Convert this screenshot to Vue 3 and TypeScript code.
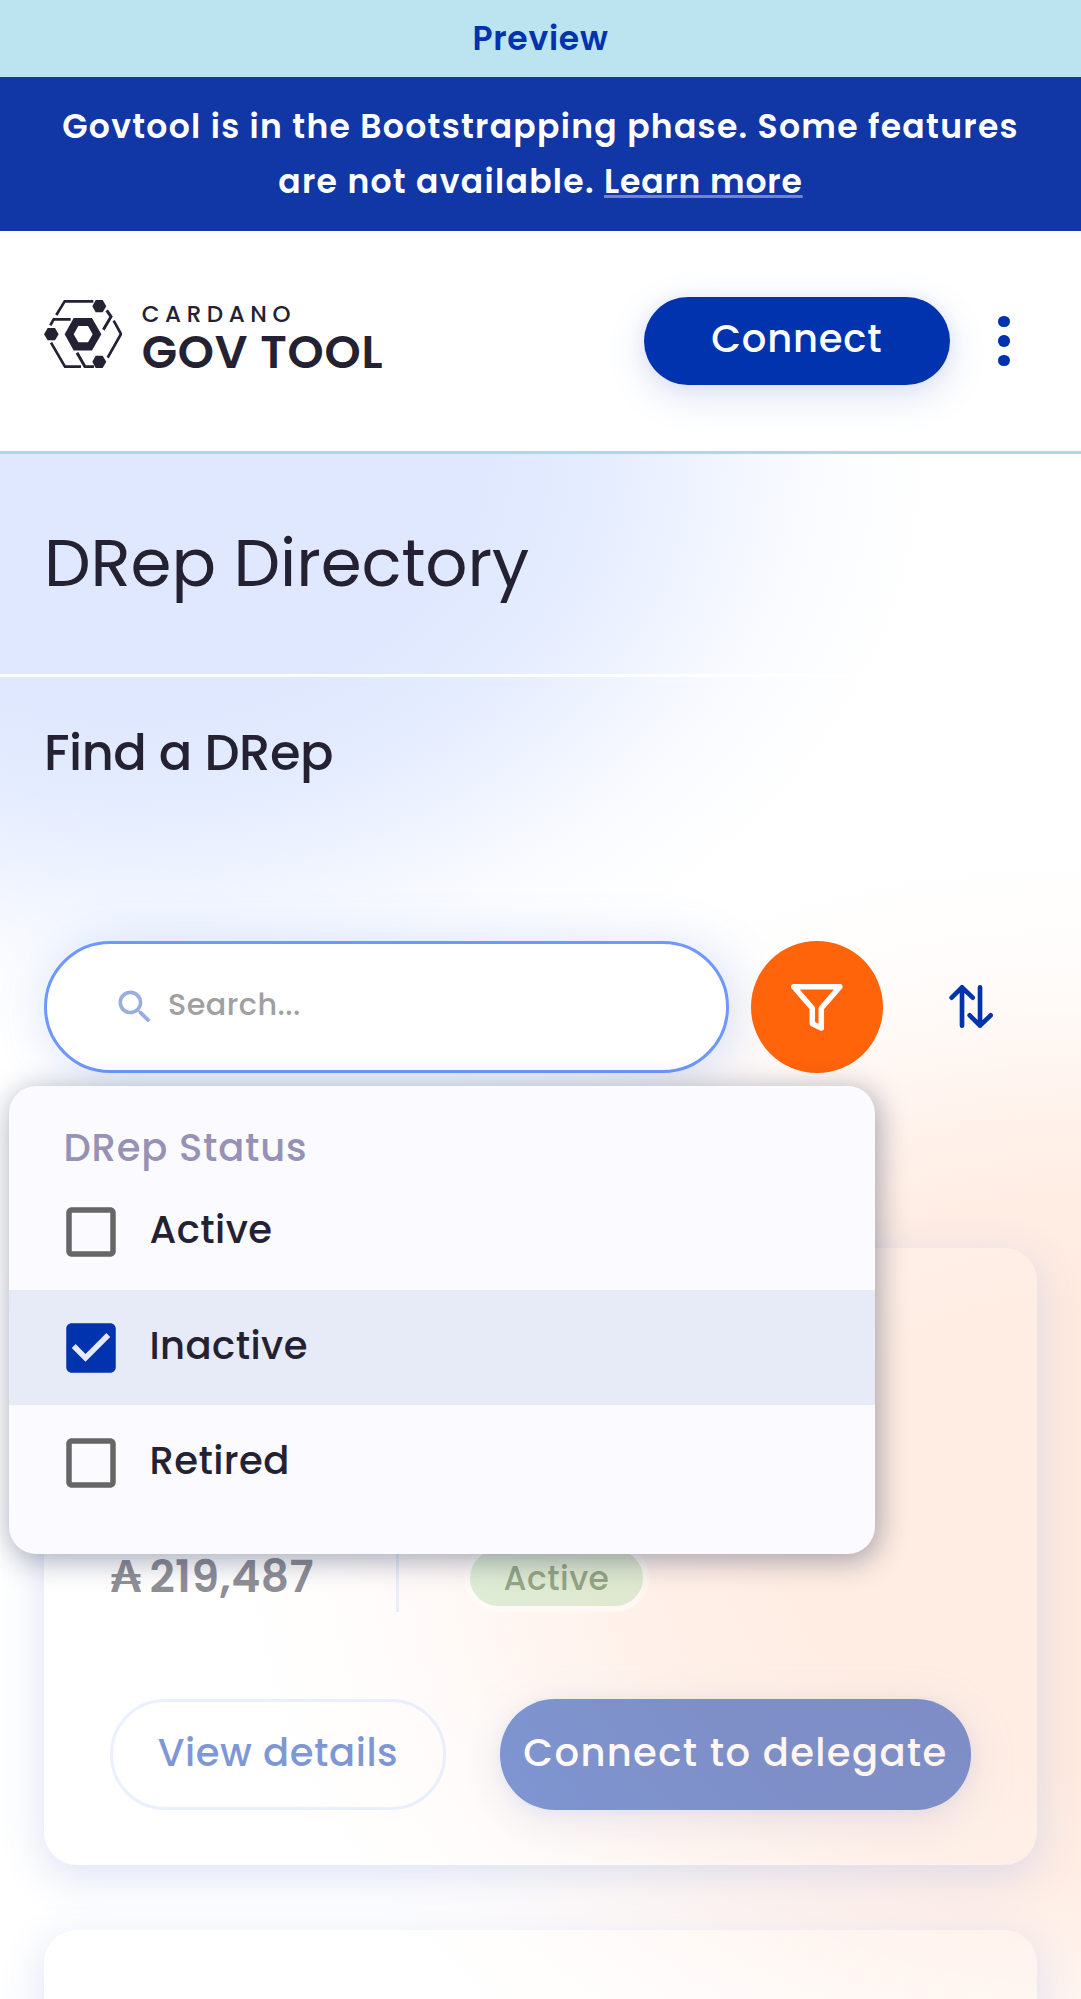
<script setup lang="ts">
import { ref } from 'vue'

interface StatusOption {
  label: string
  checked: boolean
}

const checkedPath =
  'M19 3H5c-1.11 0-2 .9-2 2v14c0 1.1.89 2 2 2h14c1.11 0 2-.9 2-2V5c0-1.1-.89-2-2-2zm-9 14l-5-5 1.41-1.41L10 14.17l7.59-7.59L19 8l-9 9z'
const uncheckedPath =
  'M19 5v14H5V5h14m0-2H5c-1.1 0-2 .9-2 2v14c0 1.1.9 2 2 2h14c1.1 0 2-.9 2-2V5c0-1.1-.9-2-2-2z'

const statuses = ref<StatusOption[]>([
  { label: 'Active', checked: false },
  { label: 'Inactive', checked: true },
  { label: 'Retired', checked: false },
])
</script>

<template>
  <div class="page">
    <div class="env-bar">Preview</div>
    <div class="notice">
      Govtool is in the Bootstrapping phase. Some features<br />
      are not available. <a class="learn">Learn more</a>
    </div>

    <header class="topbar">
      <div class="logo">
        <svg class="logo-mark" viewBox="12 30 234 204" fill="none" stroke="#242232" stroke-width="8">
          <path d="M49 75 74 34H160" />
          <path d="M31 106 41 88H92" />
          <path d="M200 61 213 80 190 119" stroke-width="9" />
          <path d="M221 92 243 132 203 203" />
          <path d="M33 158 75 230H123" />
          <path d="M111 188 135 230H162" stroke-width="9" />
          <g fill="#242232" stroke="none">
            <path d="M157 48.500 167 30H188L199 48.500 188 67H167Z" />
            <path d="M12 132.500 23 114H45L56 132.500 45 151H23Z" />
            <path d="M157 215.500 167 197H188L199 215.500 188 234H167Z" />
            <path
              fill-rule="evenodd"
              d="M74 132.500 101 84H156L184 132.500 156 181.500H101ZM101 132.500 115 157H144L158 132.500 144 108H115Z"
            />
          </g>
        </svg>
        <div class="logo-text">
          <span class="logo-top">CARDANO</span>
          <span class="logo-bottom">GOV TOOL</span>
        </div>
      </div>
      <div class="topbar-actions">
        <button class="btn-connect">Connect</button>
        <button class="kebab" aria-label="Menu"><i></i><i></i><i></i></button>
      </div>
    </header>

    <main class="content">
      <div class="title-row"><h1>DRep Directory</h1></div>
      <h2>Find a DRep</h2>

      <div class="filters">
        <div class="search">
          <svg class="search-icon" viewBox="0 0 24 24" fill="#99adde">
            <path
              d="M15.500 14h-.79l-.28-.27C15.410 12.590 16 11.110 16 9.500 16 5.910 13.090 3 9.500 3S3 5.910 3 9.500 5.910 16 9.500 16c1.610 0 3.090-.59 4.230-1.570l.27.28v.79l5 4.990L20.490 19l-4.990-5zm-6 0C7.010 14 5 11.990 5 9.500S7.010 5 9.500 5 14 7.010 14 9.500 11.990 14 9.500 14z"
            />
          </svg>
          <span>Search...</span>
        </div>
        <button class="filter-btn" aria-label="Filter">
          <svg viewBox="0 0 132 132" fill="none" stroke="#fff" stroke-width="5.500" stroke-linejoin="round">
            <path d="M42.800 45.700H88.900L70.300 67.300V87L61.300 82.800V67.300Z" />
          </svg>
        </button>
        <button class="sort-btn" aria-label="Sort">
          <svg
            viewBox="926 252 134 134"
            fill="none"
            stroke="#0033ad"
            stroke-width="14"
            stroke-linecap="round"
            stroke-linejoin="round"
          >
            <path d="M965 377V262M934 293 965 262 997 293" />
            <path d="M1019 262V377M988 346 1019 377 1051 346" />
          </svg>
        </button>

        <div class="menu">
          <p class="menu-title">DRep Status</p>
          <label v-for="s in statuses" :key="s.label" class="option" :class="{ selected: s.checked }">
            <svg class="check" viewBox="0 0 24 24">
              <path :d="s.checked ? checkedPath : uncheckedPath" />
            </svg>
            <span>{{ s.label }}</span>
          </label>
        </div>
      </div>

      <section class="card">
        <div class="stats">
          <div class="power"><span class="ada">₳</span><span class="amount">219,487</span></div>
          <div class="status"><span class="pill">Active</span></div>
        </div>
        <div class="card-actions">
          <button class="btn-view">View details</button>
          <button class="btn-delegate">Connect to delegate</button>
        </div>
      </section>
      <section class="card"></section>
    </main>
  </div>
</template>

<style>
body {
  margin: 0;
}
</style>

<style scoped>
* {
  box-sizing: border-box;
}
.page {
  width: 1081px;
  height: 1999px;
  overflow: hidden;
  display: flex;
  flex-direction: column;
  background: #fff;
  color: #242232;
  font-family: Poppins, Inter, sans-serif;
  font-feature-settings: 'cv11';
}
button {
  font: inherit;
  font-feature-settings: inherit;
  border: 0;
  background: none;
  padding: 0;
  margin: 0;
}
.env-bar {
  flex: none;
  height: 77px;
  line-height: 77px;
  text-align: center;
  background: #bbe3f0;
  color: #0033ad;
  font-size: 33px;
  font-weight: 600;
  letter-spacing: 0.740px;
}
.notice {
  flex: none;
  height: 154px;
  padding-top: 22px;
  line-height: 55px;
  text-align: center;
  white-space: nowrap;
  background: #1136a6;
  color: #fff;
  font-size: 33px;
  font-weight: 600;
  letter-spacing: 1.300px;
}
.learn {
  letter-spacing: 0.850px;
  text-decoration: underline;
  text-decoration-color: #7086ca;
  text-decoration-thickness: 2.750px;
  text-underline-offset: 2px;
  text-decoration-skip-ink: none;
}

/* top bar */
.topbar {
  flex: none;
  height: 223px;
  padding: 0 68.500px 0 44px;
  display: flex;
  align-items: center;
  justify-content: space-between;
  border-bottom: 3px solid #abd9e5;
}
.logo {
  display: flex;
  align-items: flex-start;
  gap: 19.700px;
  margin-top: -14px;
}
.logo-mark {
  width: 78px;
  height: 68px;
  display: block;
}
.logo-text {
  display: flex;
  flex-direction: column;
  height: 68px;
}
.logo-top {
  margin-top: 1.500px;
  font-size: 23px;
  line-height: 25px;
  font-weight: 500;
  letter-spacing: 5.600px;
}
.logo-bottom {
  margin-top: 1px;
  font-size: 46px;
  line-height: 48px;
  font-weight: 600;
  letter-spacing: 0.850px;
}
.topbar-actions {
  display: flex;
  align-items: center;
  gap: 46px;
}
.btn-connect {
  width: 305.500px;
  height: 88px;
  padding-bottom: 5px;
  border-radius: 44px;
  background: #0033ad;
  color: #fff;
  font-size: 38.500px;
  font-weight: 500;
  letter-spacing: 0.800px;
  box-shadow: 0 11px 41px #dde3f5, 0 2px 14px rgba(0, 51, 173, 0.12);
}
.kebab {
  width: 17px;
  display: flex;
  flex-direction: column;
  align-items: center;
  gap: 8px;
}
.kebab i {
  width: 11.300px;
  height: 11.300px;
  border-radius: 50%;
  background: #0033ad;
}

/* content */
.content {
  flex: 1;
  min-height: 0;
  background:
    radial-gradient(
      ellipse 760px 570px at 130px 0,
      #e0e8ff 45%,
      rgba(224, 233, 255, 0.88) 60%,
      rgba(224, 233, 255, 0.6) 72%,
      rgba(224, 233, 255, 0.3) 84%,
      rgba(224, 233, 255, 0.12) 93%,
      rgba(224, 233, 255, 0) 106%
    ),
    radial-gradient(
      ellipse 810px 650px at 1080px 1080px,
      #ffeadf 35%,
      rgba(255, 234, 223, 0.85) 52%,
      rgba(255, 234, 223, 0.55) 68%,
      rgba(255, 234, 223, 0.25) 81%,
      rgba(255, 234, 223, 0.09) 92%,
      rgba(255, 234, 223, 0) 105%
    );
}
.title-row {
  height: 223px;
  padding: 69px 44px 0;
  border-bottom: 3px solid rgba(255, 255, 255, 0.9);
}
h1 {
  margin: 0;
  font-size: 66px;
  line-height: 80px;
  font-weight: 400;
  letter-spacing: -0.100px;
}
h2 {
  margin: 45.500px 0 158px 44px;
  font-size: 49.500px;
  line-height: 60px;
  font-weight: 500;
  letter-spacing: -0.450px;
}

.filters {
  position: relative;
  display: flex;
  align-items: center;
  height: 132px;
  margin: 0 44px 175.500px;
}
.search {
  width: 685px;
  height: 132px;
  padding: 0 0 0 66px;
  display: flex;
  align-items: center;
  border: 3px solid #6e97ff;
  border-radius: 66px;
  background: #fff;
  box-shadow: 5.500px 5.500px 55px rgba(47, 98, 220, 0.2);
}
.search-icon {
  flex: none;
  width: 44px;
  height: 44px;
}
.search span {
  margin: 0 0 3.500px 11px;
  font-size: 30.250px;
  line-height: 40px;
  font-weight: 500;
  letter-spacing: 0.450px;
  color: #a0a0a0;
}
.filter-btn {
  width: 132px;
  height: 132px;
  margin-left: 22px;
  border-radius: 50%;
  background: #ff640a;
}
.filter-btn svg {
  display: block;
}
.sort-btn {
  width: 132px;
  height: 132px;
  margin-left: 22px;
  display: flex;
  align-items: center;
  justify-content: center;
}
.sort-btn svg {
  width: 44.700px;
  height: 44.700px;
}

.menu {
  position: absolute;
  z-index: 2;
  left: -35.500px;
  top: 145.500px;
  width: 866.500px;
  height: 467.500px;
  border-radius: 27.500px;
  background: #fbfaff;
  box-shadow: 2.750px 5.500px 30.250px rgba(0, 18, 61, 0.37);
}
.menu-title {
  margin: 39px 0 4.300px 55px;
  font-size: 38.500px;
  line-height: 45px;
  font-weight: 500;
  letter-spacing: 0.800px;
  color: #9792b5;
}
.option {
  display: flex;
  align-items: center;
  height: 115.500px;
  padding-left: 49.500px;
}
.option.selected {
  background: #e6ebf7;
}
.check {
  width: 66px;
  height: 66px;
  fill: #666;
}
.selected .check {
  fill: #0033ad;
}
.option span {
  margin: 0 0 4px 25.500px;
  font-size: 38.500px;
  line-height: 46px;
  font-weight: 500;
  letter-spacing: 0.450px;
}

/* cards */
.card {
  height: 616.500px;
  margin: 0 44px 65px;
  padding: 0 66px 55px;
  display: flex;
  flex-direction: column;
  justify-content: flex-end;
  border-radius: 33px;
  background: rgba(255, 255, 255, 0.3);
  box-shadow: 0 11px 41px #bcc8ee;
  opacity: 0.5;
}
.stats {
  display: flex;
  height: 68px;
  margin-bottom: 87.500px;
}
.power {
  width: 289px;
  display: flex;
  border-right: 3px solid #d6e2ff;
  font-size: 44px;
  line-height: 65px;
  font-weight: 600;
}
.ada {
  width: 39.400px;
}
.amount {
  letter-spacing: 0.470px;
}
.status {
  padding-left: 65px;
}
.pill {
  display: block;
  width: 185px;
  height: 68px;
  border: 6px solid #fff;
  border-radius: 34px;
  background: #c0e4ba;
  color: #2e5c20;
  font-size: 33px;
  line-height: 58px;
  font-weight: 500;
  text-align: center;
  letter-spacing: 0.440px;
}
.card-actions {
  display: flex;
  justify-content: space-between;
  height: 110.500px;
}
.btn-view,
.btn-delegate {
  padding-bottom: 4.500px;
  border-radius: 55px;
  font-size: 38.500px;
  font-weight: 500;
  white-space: nowrap;
}
.btn-view {
  width: 336px;
  border: 3px solid #d6e2ff;
  color: #0033ad;
  letter-spacing: 0.580px;
}
.btn-delegate {
  width: 471px;
  background: #0033ad;
  color: #fff;
  letter-spacing: 1.360px;
  box-shadow: 0 11px 41px rgba(150, 165, 220, 0.4), 0 2px 14px rgba(0, 51, 173, 0.12);
}
</style>
